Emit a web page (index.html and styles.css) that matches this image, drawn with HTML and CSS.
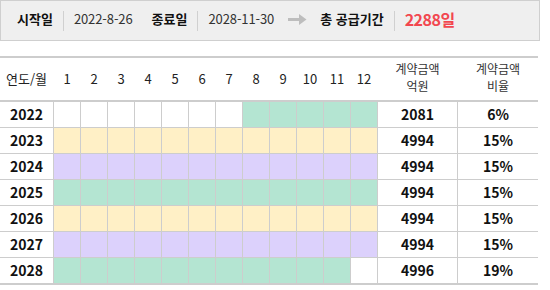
FILE: index.html
```html
<!DOCTYPE html>
<html lang="ko">
<head>
<meta charset="utf-8">
<link rel="stylesheet" href="styles.css">
</head>
<body>
<div class="summary">
  <span class="label">시작일</span><span class="sep"></span><span class="value">2022-8-26</span>
  <span class="label gap">종료일</span><span class="sep"></span><span class="value">2028-11-30</span>
  <svg class="arrow" width="19" height="11" viewBox="0 0 19 11"><rect x="0" y="4" width="12" height="3" fill="#bdbdbd"/><polygon points="11,0 18.5,5.5 11,11" fill="#bdbdbd"/></svg>
  <span class="label">총 공급기간</span><span class="sep"></span><span class="total">2288일</span>
</div>

<div class="sheet">
  <div class="head">
    <div class="hc">연도/월</div>
    <div class="hc">1</div><div class="hc">2</div><div class="hc">3</div><div class="hc">4</div>
    <div class="hc">5</div><div class="hc">6</div><div class="hc">7</div><div class="hc">8</div>
    <div class="hc">9</div><div class="hc">10</div><div class="hc">11</div><div class="hc">12</div>
    <div class="hc two"><span>계약금액</span><span>억원</span></div>
    <div class="hc two"><span>계약금액</span><span>비율</span></div>
  </div>
  <div class="body">
    <div class="yr">2022</div>
    <div class="m"></div><div class="m"></div><div class="m"></div><div class="m"></div><div class="m"></div><div class="m"></div><div class="m"></div>
    <div class="m g"></div><div class="m g"></div><div class="m g"></div><div class="m g"></div><div class="m g"></div>
    <div class="num">2081</div><div class="num">6%</div>

    <div class="yr">2023</div>
    <div class="m y"></div><div class="m y"></div><div class="m y"></div><div class="m y"></div><div class="m y"></div><div class="m y"></div>
    <div class="m y"></div><div class="m y"></div><div class="m y"></div><div class="m y"></div><div class="m y"></div><div class="m y"></div>
    <div class="num">4994</div><div class="num">15%</div>

    <div class="yr">2024</div>
    <div class="m p"></div><div class="m p"></div><div class="m p"></div><div class="m p"></div><div class="m p"></div><div class="m p"></div>
    <div class="m p"></div><div class="m p"></div><div class="m p"></div><div class="m p"></div><div class="m p"></div><div class="m p"></div>
    <div class="num">4994</div><div class="num">15%</div>

    <div class="yr">2025</div>
    <div class="m g"></div><div class="m g"></div><div class="m g"></div><div class="m g"></div><div class="m g"></div><div class="m g"></div>
    <div class="m g"></div><div class="m g"></div><div class="m g"></div><div class="m g"></div><div class="m g"></div><div class="m g"></div>
    <div class="num">4994</div><div class="num">15%</div>

    <div class="yr">2026</div>
    <div class="m y"></div><div class="m y"></div><div class="m y"></div><div class="m y"></div><div class="m y"></div><div class="m y"></div>
    <div class="m y"></div><div class="m y"></div><div class="m y"></div><div class="m y"></div><div class="m y"></div><div class="m y"></div>
    <div class="num">4994</div><div class="num">15%</div>

    <div class="yr">2027</div>
    <div class="m p"></div><div class="m p"></div><div class="m p"></div><div class="m p"></div><div class="m p"></div><div class="m p"></div>
    <div class="m p"></div><div class="m p"></div><div class="m p"></div><div class="m p"></div><div class="m p"></div><div class="m p"></div>
    <div class="num">4994</div><div class="num">15%</div>

    <div class="yr">2028</div>
    <div class="m g"></div><div class="m g"></div><div class="m g"></div><div class="m g"></div><div class="m g"></div><div class="m g"></div>
    <div class="m g"></div><div class="m g"></div><div class="m g"></div><div class="m g"></div><div class="m g"></div><div class="m"></div>
    <div class="num">4996</div><div class="num">19%</div>
  </div>
</div>
</body>
</html>
```

FILE: styles.css
```css
* { box-sizing: border-box; }
html, body { margin: 0; padding: 0; background: #fff; }
body {
  font-family: "Noto Sans CJK KR", "Noto Sans", sans-serif;
  color: #222;
  width: 550px;
  height: 290px;
  overflow: hidden;
}

.summary {
  width: 540px;
  height: 41px;
  background: #efefef;
  border: 1px solid #cfcfcf;
  display: flex;
  align-items: center;
  padding: 0 0 4px 16px;
  font-size: 13px;
}
.label { font-weight: 700; color: #111; }
.label.gap { margin-left: 19px; }
.sep {
  width: 1px;
  height: 20px;
  background: #d0d0d0;
  margin: 4px 10px 0 10px;
}
.value { color: #333; letter-spacing: -0.1px; }
.arrow { margin: 2px 13px 0 14px; }
.total { color: #f2474f; font-weight: 700; font-size: 16px; letter-spacing: -0.5px; }

.sheet {
  margin-top: 15px;
  width: 538px;
  border-top: 2px solid #cdcdcd;
  border-bottom: 2px solid #cdcdcd;
}
.head, .body {
  display: grid;
  grid-template-columns: 53px repeat(12, 26px) 79px 80px;
  column-gap: 1px;
}
.head {
  height: 44px;
  border-bottom: 2px solid #cdcdcd;
  background: #fff;
}
.hc {
  display: flex;
  align-items: center;
  justify-content: center;
  font-size: 13px;
  color: #222;
  padding-bottom: 1px;
}
.hc.two {
  flex-direction: column;
  font-size: 12px;
  line-height: 17.5px;
  color: #333;
  padding-bottom: 4px;
}

.body {
  row-gap: 1px;
  grid-auto-rows: 25px;
  background: #cdcdcd;
}
.body > div { background: #fff; }
.yr, .num {
  display: flex;
  align-items: center;
  justify-content: center;
  font-weight: 700;
  font-size: 14px;
  color: #111;
  padding-bottom: 1px;
}
.m.g { background: #b4e5d2; }
.m.y { background: #fff0c6; }
.m.p { background: #dcd1fc; }
```
